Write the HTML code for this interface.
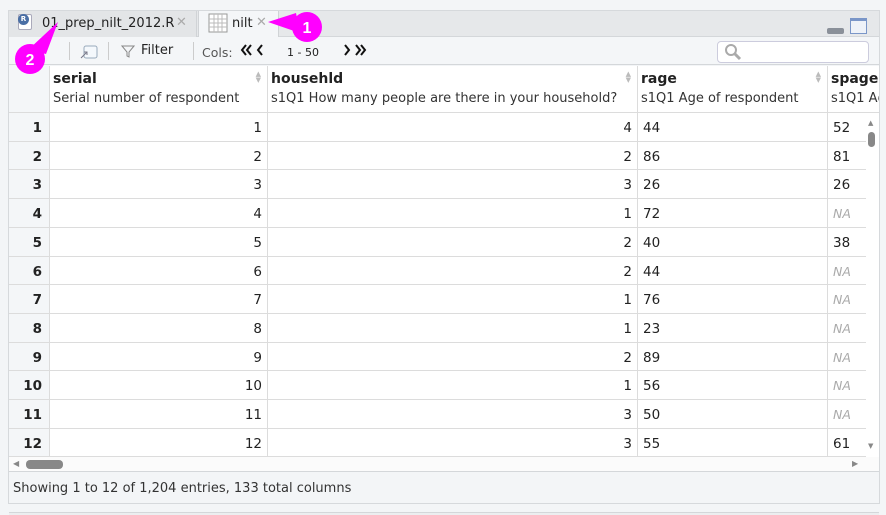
<!DOCTYPE html>
<html><head><meta charset="utf-8"><style>
*{box-sizing:border-box;margin:0;padding:0}
body{width:886px;height:515px;background:#f3f5f7;font-family:"DejaVu Sans","Liberation Sans",sans-serif;position:relative;overflow:hidden;color:#222}
.a{position:absolute}
.panel{left:8px;top:10px;width:872px;height:494px;border:1px solid #d6d9dc;background:#f3f5f7}
.tabbar{left:9px;top:11px;width:870px;height:26px;background:#e6e8ea;border-bottom:1px solid #d4d7da}
.tb{left:9px;top:37px;width:870px;height:28px;background:#f4f6f8;border-bottom:1px solid #d4d7da}
.hd{top:66px;height:47px;background:#fff;border-right:1px solid #dcdcdc;border-bottom:1px solid #dcdcdc}
.hd b{position:absolute;left:3px;top:5px;font-size:14px}
.hd span{position:absolute;left:3px;top:25px;font-size:13px;white-space:nowrap;color:#333}
.row{left:9px;width:857px;border-bottom:1px solid #dcdcdc;font-size:13.5px;background:#fff}
.c{position:absolute;top:0;bottom:0;line-height:30px;border-right:1px solid #dcdcdc;padding:0 5px;white-space:nowrap;overflow:hidden}
.rn{left:0;width:41px;background:#f4f6f8;font-weight:bold;text-align:right;padding-right:7px}
.s1{left:41px;width:218px;text-align:right}
.s2{left:259px;width:370px;text-align:right}
.s3{left:629px;width:190px}
.s4{left:819px;width:40px;border:none}
.na{color:#aaa;font-style:italic;font-size:12.5px}
.sort{position:absolute;right:6px;top:5px;font-size:7px;color:#bbb;line-height:6px}
</style></head><body>
<div class="a panel"></div>
<div class="a tabbar"></div>
<div class="a" style="left:9px;top:11px;width:188px;height:26px;background:#e3e5e7;border-right:1px solid #d0d3d6"></div>
<div class="a" style="left:18px;top:14px;width:14px;height:16px;border:1px solid #aab;border-radius:2px;background:#fff"></div>
<div class="a" style="left:18px;top:14px;width:11px;height:11px;border-radius:50%;background:#4a6fa5;color:#fff;font-size:7px;text-align:center;line-height:11px;font-weight:bold">R</div>
<div class="a" style="left:42px;top:16px;font-size:13px">01_prep_nilt_2012.R</div>
<div class="a" style="left:176px;top:15px;font-size:13px;color:#aaa">✕</div>
<div class="a" style="left:198px;top:11px;width:81px;height:27px;background:#f4f6f8;border-right:1px solid #d0d3d6;border-left:1px solid #d0d3d6"></div>
<svg class="a" style="left:208px;top:13px" width="20" height="20"><rect x="1" y="1" width="18" height="18" fill="#fff" stroke="#999"/><path d="M1 6H19M1 10H19M1 14H19M6 1V19M10 1V19M14 1V19" stroke="#bbb"/></svg>
<div class="a" style="left:232px;top:16px;font-size:13px">nilt</div>
<div class="a" style="left:256px;top:15px;font-size:13px;color:#aaa">✕</div>
<div class="a" style="left:827px;top:28px;width:17px;height:6px;background:#8a9099;border-radius:2px"></div>
<div class="a" style="left:850px;top:18px;width:17px;height:16px;border:1px solid #7a96c8;background:#eef2f8;border-top:3px solid #7a96c8"></div>
<div class="a tb"></div>
<div class="a" style="left:69px;top:42px;width:1px;height:18px;background:#ccc"></div>
<svg class="a" style="left:79px;top:43px" width="20" height="18"><rect x="5" y="3" width="13" height="12" rx="2" fill="#f4f8fc" stroke="#9ab"/><path d="M2 15L8 9M5 9H8V12" stroke="#778" fill="none"/></svg>
<div class="a" style="left:108px;top:42px;width:1px;height:18px;background:#ccc"></div>
<svg class="a" style="left:121px;top:44px" width="14" height="14"><path d="M1 2H13L8 8V13L6 12V8Z" fill="none" stroke="#888"/></svg>
<div class="a" style="left:141px;top:43px;font-size:13px">Filter</div>
<div class="a" style="left:193px;top:42px;width:1px;height:18px;background:#ccc"></div>
<div class="a" style="left:202px;top:45px;font-size:12.5px;color:#555">Cols:</div>
<svg class="a" style="left:240px;top:44px" width="26" height="12"><path d="M6 1L2 6L6 11M11 1L7 6L11 11M22 1L18 6L22 11" fill="none" stroke="#111" stroke-width="2"/></svg>
<div class="a" style="left:287px;top:46px;font-size:11px">1 - 50</div>
<svg class="a" style="left:342px;top:44px" width="26" height="12"><path d="M3 1L7 6L3 11M14 1L18 6L14 11M19 1L23 6L19 11" fill="none" stroke="#111" stroke-width="2"/></svg>
<div class="a" style="left:717px;top:41px;width:152px;height:22px;background:#fff;border:1px solid #ccd;border-radius:4px"></div>
<svg class="a" style="left:724px;top:43px" width="18" height="18"><circle cx="7" cy="7" r="5" fill="none" stroke="#aaa" stroke-width="2"/><path d="M11 11L16 16" stroke="#aaa" stroke-width="3"/></svg>
<div class="a hd" style="left:9px;width:41px;background:#f4f6f8"></div>
<div class="a hd" style="left:50px;width:218px"><b>serial</b><span>Serial number of respondent</span><div class="sort">▲<br>▼</div></div>
<div class="a hd" style="left:268px;width:370px"><b>househld</b><span>s1Q1 How many people are there in your household?</span><div class="sort">▲<br>▼</div></div>
<div class="a hd" style="left:638px;width:190px"><b>rage</b><span>s1Q1 Age of respondent</span><div class="sort">▲<br>▼</div></div>
<div class="a hd" style="left:828px;width:51px;border-right:none;overflow:hidden"><b>spage</b><span>s1Q1 Age</span></div>
<div id="rows"></div>
<div class="a" style="left:866px;top:113px;width:13px;height:345px;background:#fff"></div>
<div class="a" style="left:868px;top:119px;font-size:7px;color:#888">▲</div>
<div class="a" style="left:868px;top:132px;width:7px;height:15px;background:#888;border-radius:4px"></div>
<div class="a" style="left:868px;top:442px;font-size:7px;color:#888">▼</div>
<div class="a" style="left:9px;top:457px;width:870px;height:15px;background:#fbfbfb;border-bottom:1px solid #d4d7da"></div>
<div class="a" style="left:13px;top:459px;font-size:8px;color:#888">◀</div>
<div class="a" style="left:26px;top:460px;width:37px;height:9px;background:#888;border-radius:4px"></div>
<div class="a" style="left:852px;top:459px;font-size:8px;color:#888">▶</div>
<div class="a" style="left:13px;top:481px;font-size:13px;color:#333">Showing 1 to 12 of 1,204 entries, 133 total columns</div>
<div class="a" style="left:9px;top:512px;width:870px;height:3px;border-top:1px solid #d4d7da;background:#eceef0"></div>
<svg class="a" style="left:0;top:0" width="340" height="80"><path d="M268 22L296 13L300 33Z" fill="#f0f"/><circle cx="307" cy="27" r="15" fill="#f0f"/><text x="307" y="33" font-family="Liberation Sans" font-weight="bold" font-size="16" fill="#fff" text-anchor="middle">1</text><path d="M58 22L28 50L46 54Z" fill="#f0f"/><circle cx="30" cy="59" r="15" fill="#f0f"/><text x="30" y="65" font-family="Liberation Sans" font-weight="bold" font-size="16" fill="#fff" text-anchor="middle">2</text></svg>
<script>
var h=[4,2,3,1,2,2,1,1,2,1,3,3],r=[44,86,26,72,40,44,76,23,89,56,50,55],s=[52,81,26,'NA',38,'NA','NA','NA','NA','NA','NA',61],o='';
for(var i=0;i<12;i++){var y=Math.round(113+i*28.7),y2=Math.round(113+(i+1)*28.7);o+='<div class="a row" style="top:'+y+'px;height:'+(y2-y)+'px"><div class="c rn">'+(i+1)+'</div><div class="c s1">'+(i+1)+'</div><div class="c s2">'+h[i]+'</div><div class="c s3">'+r[i]+'</div><div class="c s4">'+(s[i]=='NA'?'<span class="na">NA</span>':s[i])+'</div></div>';}
document.getElementById('rows').innerHTML=o;
</script>
</body></html>
